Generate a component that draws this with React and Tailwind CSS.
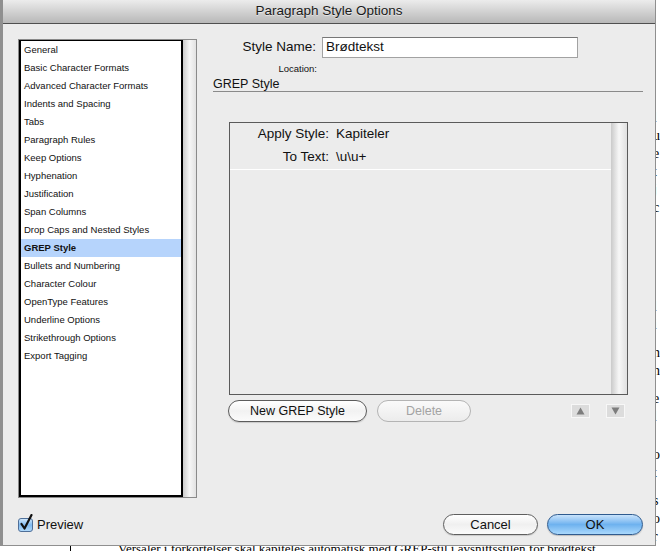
import React from "react";

const sections = [
    "General",
    "Basic Character Formats",
    "Advanced Character Formats",
    "Indents and Spacing",
    "Tabs",
    "Paragraph Rules",
    "Keep Options",
    "Hyphenation",
    "Justification",
    "Span Columns",
    "Drop Caps and Nested Styles",
    "GREP Style",
    "Bullets and Numbering",
    "Character Colour",
    "OpenType Features",
    "Underline Options",
    "Strikethrough Options",
    "Export Tagging",
];

// glyph fragments of the document peeking out at the right of the dialog
const edgeLines = ["l", "u", "e", "t", "j", "c", "", "", "", "", "", "", "", "", "l", "i", "", "n", "n", "", "e", "l", "", "", "o", "t", "", "s", "o", "r"];

function TitleBar() {
    return (
        <div className="h-[24px] shrink-0 flex items-center justify-center bg-linear-to-b from-[#ececec] to-[#b8b8b8] border-b border-[#4f4f4f]">
            <span className="text-[13.5px] text-[#1a1a1a] [text-shadow:0_1px_0_rgba(255,255,255,0.5)]">Paragraph Style Options</span>
        </div>
    );
}

function SectionList() {
    return (
        <div className="mt-[2px] w-[179px] h-[459px] flex border border-[#8a8a8a] bg-white">
            <div className="w-[164px] h-full border-l-2 border-r-2 border-b-2 border-t border-black overflow-hidden">
                {sections.map((name) => (
                    <div
                        key={name}
                        className={
                            name === "GREP Style"
                                ? "h-[18px] flex items-center pl-[3px] bg-[#b6d4fc] text-[9.5px] font-bold"
                                : "h-[18px] flex items-center pl-[3px] text-[9.5px]"
                        }
                    >
                        {name}
                    </div>
                ))}
            </div>
            <div className="flex-1 bg-linear-to-r from-[#cdcdcd] via-[#f6f6f6] to-[#e2e2e2]" />
        </div>
    );
}

function PillButton({ children, disabled, width }) {
    return (
        <div
            className={
                disabled
                    ? `${width} h-[22px] rounded-full border border-[#b4b4b4] bg-linear-to-b from-[#fafafa] to-[#ececec] flex items-center justify-center text-[12.5px] text-[#a3a3a3]`
                    : `${width} h-[22px] rounded-full border border-[#5c5c5c] bg-linear-to-b from-white via-[#f2f2f2] to-[#fbfbfb] flex items-center justify-center text-[12.5px] text-[#111] shadow-[0_1px_1px_rgba(0,0,0,0.15)]`
            }
        >
            {children}
        </div>
    );
}

function ArrowButton({ up }) {
    return (
        <div className="w-[19px] h-[14px] border border-[#f7f7f7] bg-[#dcdcdc] flex items-center justify-center">
            <svg width="9" height="8" viewBox="0 0 9 8">
                {up ? <path d="M4.5 0.5 L8.5 7.5 L0.5 7.5 Z" fill="#7d7d7d" /> : <path d="M0.5 0.5 L8.5 0.5 L4.5 7.5 Z" fill="#7d7d7d" />}
            </svg>
        </div>
    );
}

function GrepPanel() {
    return (
        <div className="ml-[16px] w-[430px] flex flex-col">
            {/* Style name */}
            <div className="h-[21px] flex items-center">
                <span className="w-[103px] text-right text-[13.5px]">Style Name:</span>
                <div className="ml-[6px] w-[256px] h-[21px] bg-white border border-[#a2a2a2] border-t-[#777] flex items-center pl-[3px] text-[13.5px]">
                    Brødtekst
                </div>
            </div>
            <div className="mt-[5px] h-[11px] w-[104px] text-right text-[9.5px] leading-[11px]">Location:</div>

            <div className="mt-[3px] h-[15px] border-b border-[#8a8a8a] text-[12.5px] leading-[14px]">GREP Style</div>

            {/* GREP rules box */}
            <div className="mt-[30px] ml-[16px] w-[399px] h-[273px] border border-[#5a5a5a] flex">
                <div className="flex-1">
                    <div className="border-b border-white text-[13.5px]">
                        <div className="h-[23px] flex items-center">
                            <span className="w-[99px] text-right">Apply Style:</span>
                            <span className="ml-[7px]">Kapiteler</span>
                        </div>
                        <div className="h-[23px] flex items-center">
                            <span className="w-[99px] text-right">To Text:</span>
                            <span className="ml-[7px]">\u\u+</span>
                        </div>
                    </div>
                </div>
                <div className="w-[16px] bg-linear-to-r from-[#cacaca] via-[#f7f7f7] to-[#e0e0e0]" />
            </div>

            <div className="mt-[5px] h-[22px] pl-[15px] flex items-center">
                <PillButton width="w-[139px]">New GREP Style</PillButton>
                <div className="ml-[10px]">
                    <PillButton width="w-[94px]" disabled>
                        Delete
                    </PillButton>
                </div>
                <div className="ml-[100px]">
                    <ArrowButton up />
                </div>
                <div className="ml-[16px]">
                    <ArrowButton />
                </div>
            </div>
        </div>
    );
}

function Footer() {
    return (
        <div className="mt-[16px] h-[21px] flex items-center pl-[15px] pr-[12px]">
            <svg width="16" height="18" viewBox="0 0 16 18" className="-mt-[3px]">
                <defs>
                    <linearGradient id="cb" x1="0" y1="0" x2="0" y2="1">
                        <stop offset="0" stopColor="#d6ebfd" />
                        <stop offset="0.5" stopColor="#7fbaf0" />
                        <stop offset="1" stopColor="#b5dcfb" />
                    </linearGradient>
                </defs>
                <rect x="0.5" y="4.5" width="14" height="13" rx="2.5" fill="url(#cb)" stroke="#4f6f98" />
                <path d="M3.5 10 L6.5 14.5 L13.5 1" fill="none" stroke="#111" strokeWidth="2.2" strokeLinecap="round" strokeLinejoin="round" />
            </svg>
            <span className="ml-[3px] text-[13px]">Preview</span>
            <div className="ml-auto w-[95px] h-[21px] rounded-full border border-[#5f5f5f] bg-linear-to-b from-white via-[#f0f0f0] to-[#fbfbfb] flex items-center justify-center text-[13px] shadow-[0_1px_1px_rgba(0,0,0,0.15)]">
                Cancel
            </div>
            <div className="ml-[9px] w-[96px] h-[21px] rounded-full border border-[#2f5b8f] bg-linear-to-b from-[#c9e3fb] via-[#6eb2ef] to-[#a9d8fc] flex items-center justify-center text-[13px] shadow-[0_1px_1px_rgba(0,0,0,0.2)]">
                OK
            </div>
        </div>
    );
}

export default function App() {
    return (
        <div className="w-[660px] h-[551px] overflow-hidden bg-white flex flex-col font-['Liberation_Sans',Arial,sans-serif] text-[#111]">
            <div className="h-[546px] shrink-0 flex">
                {/* Dialog window */}
                <div className="w-[656px] h-[546px] shrink-0 flex flex-col bg-[#ececec] border-l-[3px] border-r border-b border-[#8f8f8f]">
                    <TitleBar />
                    <div className="h-[474px] shrink-0 flex pt-[13px] pl-[15px]">
                        <SectionList />
                        <GrepPanel />
                    </div>
                    <Footer />
                </div>

                {/* document behind, right edge */}
                <div className="flex-1 overflow-hidden pt-[109px] flex flex-col font-['Liberation_Serif',serif] text-[14px] text-black">
                    {edgeLines.map((c, i) => (
                        <div key={i} className="h-[18px] leading-[18px] -ml-[3px] whitespace-nowrap">
                            {c}
                        </div>
                    ))}
                </div>
            </div>

            {/* document behind, bottom edge */}
            <div className="flex-1 overflow-hidden flex font-['Liberation_Serif',serif] text-[13px] text-black">
                <div className="w-[70px] shrink-0" />
                <div className="border-l border-black pl-[47px] whitespace-nowrap leading-[13px] -mt-[4px]">
                    Versaler i forkortelser skal kapiteles automatisk med GREP-stil i avsnittsstilen for brødtekst.
                </div>
            </div>
        </div>
    );
}
